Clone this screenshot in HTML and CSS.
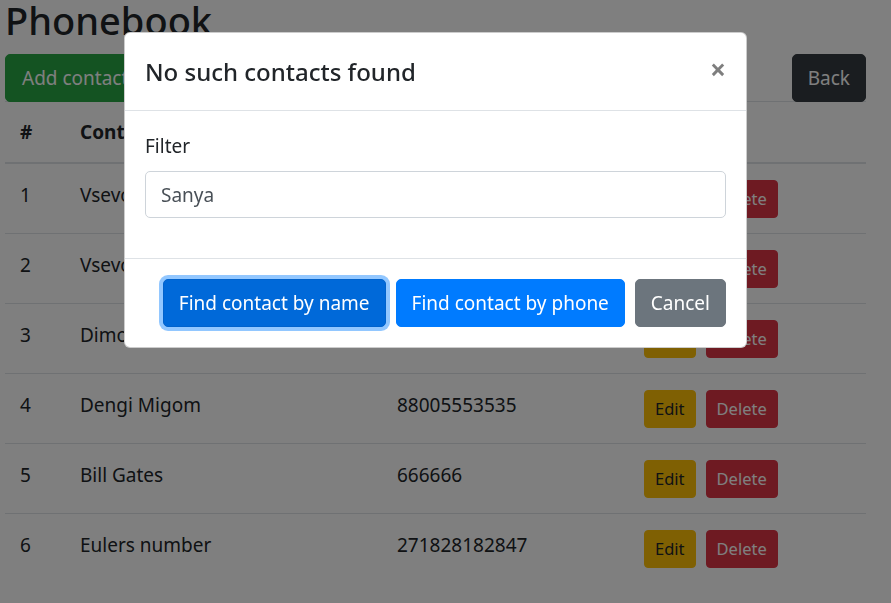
FILE: index.html
```html
<!DOCTYPE html>
<html lang="en">
<head>
<meta charset="utf-8">
<title>Phonebook</title>
<link rel="stylesheet" href="styles.css">
</head>
<body>
<div class="page">
  <h1 class="title">Phonebook</h1>
  <div class="toolbar">
    <button class="btn btn-success">Add contact</button>
    <div class="spacer"></div>
    <button class="btn btn-dark">Back</button>
  </div>
  <table class="table">
    <colgroup>
      <col class="c1"><col class="c2"><col class="c3"><col class="c4">
    </colgroup>
    <thead>
      <tr><th>#</th><th>Contact name</th><th>Phone number</th><th>Actions</th></tr>
    </thead>
    <tbody>
      <tr><td>1</td><td>Vsevolod Ivanov</td><td>89161234567</td><td><button class="btn btn-sm btn-warning">Edit</button><button class="btn btn-sm btn-danger">Delete</button></td></tr>
      <tr><td>2</td><td>Vsevolod Petrov</td><td>89267654321</td><td><button class="btn btn-sm btn-warning">Edit</button><button class="btn btn-sm btn-danger">Delete</button></td></tr>
      <tr><td>3</td><td>Dimon Sidorov</td><td>89031112233</td><td><button class="btn btn-sm btn-warning">Edit</button><button class="btn btn-sm btn-danger">Delete</button></td></tr>
      <tr><td>4</td><td>Dengi Migom</td><td>88005553535</td><td><button class="btn btn-sm btn-warning">Edit</button><button class="btn btn-sm btn-danger">Delete</button></td></tr>
      <tr><td>5</td><td>Bill Gates</td><td>666666</td><td><button class="btn btn-sm btn-warning">Edit</button><button class="btn btn-sm btn-danger">Delete</button></td></tr>
      <tr><td>6</td><td>Eulers number</td><td>271828182847</td><td><button class="btn btn-sm btn-warning">Edit</button><button class="btn btn-sm btn-danger">Delete</button></td></tr>
    </tbody>
  </table>
</div>

<div class="backdrop"></div>
<div class="modal">
  <div class="modal-content">
    <div class="modal-header">
      <h5 class="modal-title">No such contacts found</h5>
      <button class="close" aria-label="Close">×</button>
    </div>
    <div class="modal-body">
      <div class="form-group">
        <label class="label" for="filter">Filter</label>
        <input id="filter" class="form-control" type="text" value="Sanya">
      </div>
    </div>
    <div class="modal-footer">
      <button class="btn btn-primary focused">Find contact by name</button>
      <button class="btn btn-primary">Find contact by phone</button>
      <button class="btn btn-secondary">Cancel</button>
    </div>
  </div>
</div>
</body>
</html>
```
FILE: styles.css
```css
* { box-sizing: border-box; }
html, body { margin: 0; padding: 0; }
body {
  font-family: "Noto Sans", "Open Sans", sans-serif;
  font-size: 19px;
  line-height: 30px;
  color: #212529;
  background: #fff;
  overflow: hidden;
}
.page {
  padding: 0 25px 0 5px;
}
.title {
  font-size: 38px;
  font-weight: 500;
  line-height: 48px;
  margin: -4px 0 10px 0;
}
.toolbar {
  display: flex;
  align-items: stretch;
  position: relative;
  z-index: 1;
  margin-bottom: -1px;
}
.spacer { flex: 1; }
.btn {
  font-family: inherit;
  font-size: 19px;
  line-height: 30px;
  padding: 8px 16px;
  border: 1px solid transparent;
  border-radius: 5px;
  color: #fff;
  cursor: pointer;
  display: inline-block;
  vertical-align: top;
  white-space: nowrap;
}
.btn-success { background: #28a745; border-color: #28a745; }
.btn-dark { background: #343a40; border-color: #343a40; padding: 8px 15px; }
.btn-primary { background: #007bff; border-color: #007bff; }
.btn-primary.focused {
  background: #0069d9;
  border-color: #0062cc;
  box-shadow: 0 0 0 4px rgba(38, 143, 255, .5);
}
.btn-secondary { background: #6c757d; border-color: #6c757d; }
.btn-sm {
  font-size: 16.5px;
  line-height: 26px;
  padding: 5px 10px;
  border-radius: 4px;
}
.btn-warning { background: #ffc107; border-color: #ffc107; color: #212529; }
.btn-danger { background: #dc3545; border-color: #dc3545; margin-left: 10px; }

.table {
  width: 100%;
  border-collapse: collapse;
  table-layout: fixed;
}
.c1 { width: 60px; }
.c2 { width: 317px; }
.c3 { width: 247px; }
.table th, .table td {
  text-align: left;
  padding: 15px;
  border-top: 1px solid #dee2e6;
  vertical-align: top;
  line-height: 30px;
  white-space: nowrap;
  overflow: hidden;
}
.table th { font-weight: 700; border-bottom: 2px solid #dee2e6; }
.table td { padding-top: 16px; padding-bottom: 15px; height: 70px; }
.table td .btn { height: 38px; }

.backdrop {
  position: fixed;
  inset: 0;
  background: rgba(0, 0, 0, .5);
  z-index: 10;
}
.modal {
  position: fixed;
  inset: 0;
  z-index: 20;
  display: flex;
  justify-content: center;
  align-items: flex-start;
  padding: 32px 20px 0 0;
}
.modal-content {
  width: 623px;
  background: #fff;
  border: 1px solid rgba(0, 0, 0, .2);
  border-radius: 6px;
  display: flex;
  flex-direction: column;
}
.modal-header {
  display: flex;
  align-items: flex-start;
  justify-content: space-between;
  padding: 20px;
  border-bottom: 1px solid #dee2e6;
}
.modal-title {
  margin: 0;
  font-size: 24px;
  font-weight: 500;
  line-height: 37px;
}
.close {
  font-family: "Noto Sans", sans-serif;
  background: transparent;
  border: 0;
  padding: 20px;
  margin: -18px -20px -20px auto;
  font-size: 28px;
  font-weight: 700;
  line-height: 1;
  color: #000;
  opacity: .5;
  text-shadow: 0 1px 0 #fff;
  cursor: pointer;
}
.modal-body {
  padding: 20px;
}
.form-group { margin-bottom: 20px; }
.label {
  display: block;
  margin-bottom: 10px;
}
.form-control {
  display: block;
  width: 100%;
  height: 47px;
  padding: 7px 15px;
  font-family: inherit;
  font-size: 19px;
  line-height: 30px;
  color: #495057;
  background: #fff;
  border: 1px solid #ced4da;
  border-radius: 5px;
}
.modal-footer {
  display: flex;
  justify-content: flex-end;
  align-items: center;
  padding: 15px;
  border-top: 1px solid #dee2e6;
}
.modal-footer .btn { margin: 5px; padding: 8px 15px; }
```
